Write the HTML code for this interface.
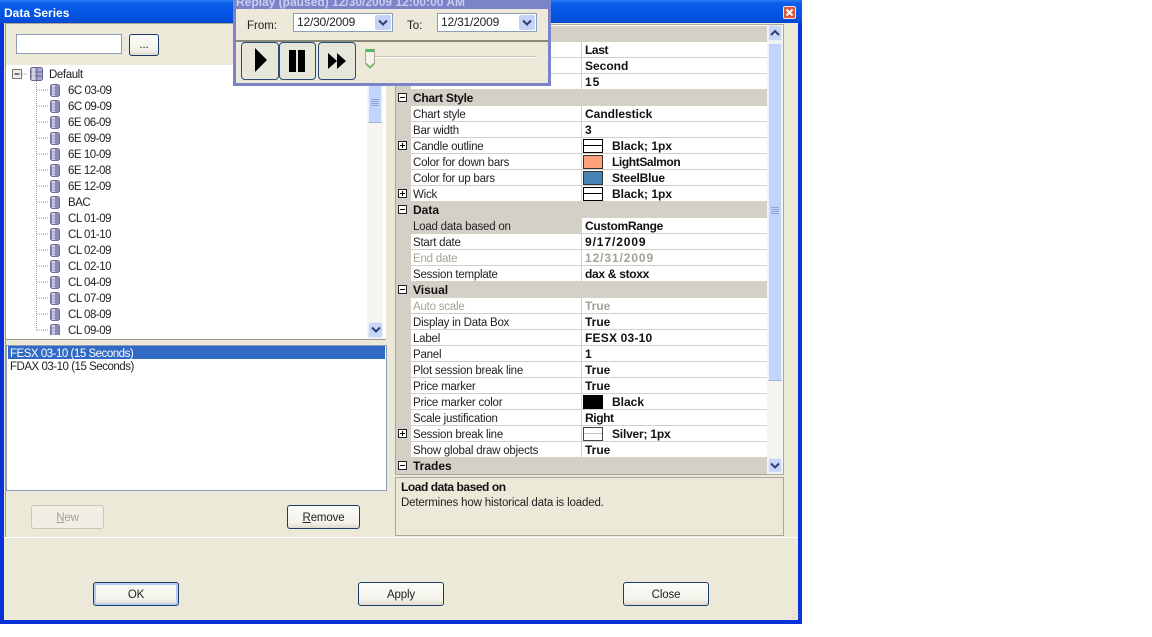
<!DOCTYPE html>
<html><head><meta charset="utf-8"><style>
html,body{margin:0;padding:0;background:#fff}
body{width:1152px;height:637px;overflow:hidden;position:relative;font:11.5px "Liberation Sans",sans-serif;color:#000}
div,span,svg{position:absolute;box-sizing:border-box}
.t{white-space:nowrap;line-height:18px;height:16px}
.tree{left:68px;color:#222;letter-spacing:-.48px}
.r{left:411px;width:356px;height:16px;background:#fff;border-bottom:1px solid #d4d0c8}
.h{left:396px;width:371px;height:16px;background:#d4d0c8}
.n{left:413px;color:#222;letter-spacing:-.22px}
.v{left:585px;font:bold 12px "Liberation Sans",sans-serif;line-height:16px;color:#111}
.hl{left:413px;font:bold 12px "Liberation Sans",sans-serif;line-height:16px;color:#111}
.sep{left:581px;width:1px;height:16px;background:#d4d0c8}
.pm{width:9px;height:9px;border:1px solid #222;background:#fff;left:398px}
.pm i{position:absolute;left:1px;top:3px;width:5px;height:1px;background:#000}
.pm b{position:absolute;left:3px;top:1px;width:1px;height:5px;background:#000}
.sw{left:583px;width:20px;height:14px;border:1px solid #000}
.ln{background:linear-gradient(#fff 5px,#000 5px,#000 6px,#fff 6px)}
.btn{border:1px solid #1c3c68;border-radius:3px;background:linear-gradient(#fbfbf8,#f3f2ea 75%,#dedacd);text-align:center;color:#222;letter-spacing:-.15px}
.mb{border:1px solid #2a4a78;border-radius:4px;background:#e6e6da;top:42px;height:38px}
.date{background:#fff;border:1px solid #8d9db8;height:19px;top:13px;color:#222;padding-left:3px;line-height:16px;font-size:12px;letter-spacing:-.2px}
.ar{right:1px;top:1px;width:16px;height:15px;background:#c5d3f4;border-radius:2px}
u{text-decoration:underline}
</style></head><body>
<svg width="0" height="0" style="position:absolute"><defs>
<symbol id="db" viewBox="0 0 10 13"><rect x=".5" y=".5" width="9" height="12" rx="2" fill="#8f8fc0" stroke="#70709a"/><rect x="2" y="1" width="3" height="11" fill="#d0d0ea"/><path d="M1 4h8M1 7h8M1 10h8" stroke="#70709a" stroke-width=".6"/></symbol>
<symbol id="ch" viewBox="0 0 10 8"><path d="M1 1.500L5 5.500L9 1.500" fill="none" stroke="#2a3f78" stroke-width="2"/></symbol>
<symbol id="up" viewBox="0 0 10 8"><path d="M1 6L5 2L9 6" fill="none" stroke="#2a3f78" stroke-width="2"/></symbol>
</defs></svg>

<!-- window -->
<div style="left:0;top:0;width:802px;height:624px;background:#0831d9"></div>
<div style="left:0;top:0;width:802px;height:24px;background:linear-gradient(#2a7cf0 0,#0a5fe8 3px,#0355e6 12px,#0450dc 20px,#0342c4)"></div>
<div style="left:4px;top:23px;width:794px;height:597px;background:#ece9d8"></div>
<div class="t" style="left:4px;top:5px;color:#fff;font-weight:bold;font-size:12px;line-height:16px">Data Series</div>
<div style="left:783px;top:6px;width:13px;height:13px;background:#d9583a;border:1px solid #f4e4dc;border-radius:2px">
<svg width="11" height="11" style="left:0;top:0"><path d="M2.500 2.500L8.500 8.500M8.500 2.500L2.500 8.500" stroke="#fff" stroke-width="2"/></svg></div>

<!-- left panel -->
<div style="left:5px;top:23px;width:382px;height:514px;border-left:1px solid #9a9a8c;border-top:1px solid #aca899"></div>
<div style="left:16px;top:34px;width:106px;height:20px;background:#fff;border:1px solid #8d9db8"></div>
<div class="btn" style="left:129px;top:34px;width:30px;height:22px;line-height:20px">...</div>

<div style="left:6px;top:65px;width:380px;height:275px;background:#fff;border-bottom:1px solid #9a9a8c"></div>
<div style="left:367px;top:65px;width:16px;height:274px;background:#f5f4ee"></div>
<div style="left:368px;top:80px;width:14px;height:43px;background:#c3d4fc;border:1px solid #eef2fe;border-bottom-color:#9fb3dd"></div>
<svg width="8" height="8" style="left:371px;top:99px"><path d="M0 .5h8M0 2.500h8M0 4.500h8M0 6.500h8" stroke="#8fa6da"/></svg>
<div style="left:368px;top:322px;width:15px;height:16px;background:#c8d6f5;border:1px solid #e8eefc;border-radius:2px"><svg width="10" height="8" style="left:2px;top:3px"><use href="#ch"/></svg></div>

<!-- tree lines -->
<div style="left:36px;top:79px;width:1px;height:251px;border-left:1px dotted #999"></div>
<svg width="60" height="270" style="left:0;top:65px">
<path d="M37 25h12M37 41h12M37 57h12M37 73h12M37 89h12M37 105h12M37 121h12M37 137h12M37 153h12M37 169h12M37 185h12M37 201h12M37 217h12M37 233h12M37 249h12M37 265h12M22 9h6" stroke="#999" stroke-dasharray="1 1" fill="none"/>
<rect x="12.500" y="4.500" width="9" height="9" fill="#eee" stroke="#777"/><path d="M14.500 9h5" stroke="#000"/>
<rect x="30.500" y="2.500" width="12" height="13" rx="2" fill="#a9a9d3" stroke="#66668f"/><path d="M31 7h11M31 11h11M37 3v12" stroke="#66668f"/><rect x="32" y="3" width="3" height="12" fill="#dcdcf0" opacity=".8"/>
<use href="#db" x="50" y="19" width="10" height="13"/><use href="#db" x="50" y="35" width="10" height="13"/><use href="#db" x="50" y="51" width="10" height="13"/><use href="#db" x="50" y="67" width="10" height="13"/><use href="#db" x="50" y="83" width="10" height="13"/><use href="#db" x="50" y="99" width="10" height="13"/><use href="#db" x="50" y="115" width="10" height="13"/><use href="#db" x="50" y="131" width="10" height="13"/><use href="#db" x="50" y="147" width="10" height="13"/><use href="#db" x="50" y="163" width="10" height="13"/><use href="#db" x="50" y="179" width="10" height="13"/><use href="#db" x="50" y="195" width="10" height="13"/><use href="#db" x="50" y="211" width="10" height="13"/><use href="#db" x="50" y="227" width="10" height="13"/><use href="#db" x="50" y="243" width="10" height="13"/><use href="#db" x="50" y="259" width="10" height="13"/>
</svg>
<div class="t" style="left:49px;top:66px;color:#222;letter-spacing:-.4px">Default</div>
<div class="t tree" style="top:82px">6C 03-09</div>
<div class="t tree" style="top:98px">6C 09-09</div>
<div class="t tree" style="top:114px">6E 06-09</div>
<div class="t tree" style="top:130px">6E 09-09</div>
<div class="t tree" style="top:146px">6E 10-09</div>
<div class="t tree" style="top:162px">6E 12-08</div>
<div class="t tree" style="top:178px">6E 12-09</div>
<div class="t tree" style="top:194px">BAC</div>
<div class="t tree" style="top:210px">CL 01-09</div>
<div class="t tree" style="top:226px">CL 01-10</div>
<div class="t tree" style="top:242px">CL 02-09</div>
<div class="t tree" style="top:258px">CL 02-10</div>
<div class="t tree" style="top:274px">CL 04-09</div>
<div class="t tree" style="top:290px">CL 07-09</div>
<div class="t tree" style="top:306px">CL 08-09</div>
<div class="t tree" style="top:322px">CL 09-09</div>

<!-- list -->
<div style="left:6px;top:345px;width:381px;height:146px;background:#fff;border:1px solid #8d9db8"></div>
<div style="left:8px;top:346px;width:377px;height:13px;background:#316ac5"></div>
<div class="t" style="left:10px;top:345px;color:#fff;letter-spacing:-.48px">FESX 03-10 (15 Seconds)</div>
<div class="t" style="left:10px;top:358px;color:#222;letter-spacing:-.48px">FDAX 03-10 (15 Seconds)</div>

<div class="btn" style="left:31px;top:505px;width:73px;height:24px;line-height:24px;color:#a5a294;border-color:#c9c7ba;background:#f1efe4"><u>N</u>ew</div>
<div class="btn" style="left:287px;top:505px;width:73px;height:24px;line-height:24px"><u>R</u>emove</div>

<!-- separator -->
<div style="left:4px;top:537px;width:794px;height:1px;background:#fff"></div>
<div class="btn" style="left:93px;top:582px;width:86px;height:24px;line-height:24px;box-shadow:inset 0 0 0 2px #b6ccf2">OK</div>
<div class="btn" style="left:358px;top:582px;width:86px;height:24px;line-height:24px">Apply</div>
<div class="btn" style="left:623px;top:582px;width:86px;height:24px;line-height:24px">Close</div>
<svg width="12" height="12" style="left:788px;top:610px"><path d="M9.500 1.500h1M6.500 4.500h1M9.500 4.500h1M3.500 7.500h1M6.500 7.500h1M9.500 7.500h1" stroke="#b5b2a2"/></svg>

<!-- property grid -->
<div style="left:395px;top:24px;width:389px;height:451px;background:#fff;border:1px solid #aca899"></div>
<div class="h" style="top:26px"></div>
<div style="left:396px;top:42px;width:15px;height:416px;background:#d4d0c8"></div>

<div class="r" style="top:42px"></div><div class="sep" style="top:42px"></div><div class="t v" style="top:42px;letter-spacing:-.4px">Last</div>
<div class="r" style="top:58px"></div><div class="sep" style="top:58px"></div><div class="t v" style="top:58px">Second</div>
<div class="r" style="top:74px"></div><div class="sep" style="top:74px"></div><div class="t v" style="top:74px;letter-spacing:1px">15</div>

<div class="h" style="top:90px"></div><div class="pm" style="top:93px"><i></i></div><div class="t hl" style="top:90px;letter-spacing:-.3px">Chart Style</div>
<div class="r" style="top:106px"></div><div class="sep" style="top:106px"></div><div class="t n" style="top:106px">Chart style</div><div class="t v" style="top:106px">Candlestick</div>
<div class="r" style="top:122px"></div><div class="sep" style="top:122px"></div><div class="t n" style="top:122px">Bar width</div><div class="t v" style="top:122px">3</div>
<div class="r" style="top:138px"></div><div class="sep" style="top:138px"></div><div class="pm" style="top:141px"><i></i><b></b></div><div class="t n" style="top:138px">Candle outline</div><div class="sw ln" style="top:139px"></div><div class="t v" style="top:138px;left:612px">Black; 1px</div>
<div class="r" style="top:154px"></div><div class="sep" style="top:154px"></div><div class="t n" style="top:154px">Color for down bars</div><div class="sw" style="top:155px;background:#ffa07a;border-color:#333"></div><div class="t v" style="top:154px;left:612px;letter-spacing:-.4px">LightSalmon</div>
<div class="r" style="top:170px"></div><div class="sep" style="top:170px"></div><div class="t n" style="top:170px">Color for up bars</div><div class="sw" style="top:171px;background:#4682b4;border-color:#333"></div><div class="t v" style="top:170px;left:612px;letter-spacing:-.2px">SteelBlue</div>
<div class="r" style="top:186px"></div><div class="sep" style="top:186px"></div><div class="pm" style="top:189px"><i></i><b></b></div><div class="t n" style="top:186px">Wick</div><div class="sw ln" style="top:187px"></div><div class="t v" style="top:186px;left:612px">Black; 1px</div>

<div class="h" style="top:202px"></div><div class="pm" style="top:205px"><i></i></div><div class="t hl" style="top:202px">Data</div>
<div class="r" style="top:218px"></div><div style="left:411px;top:218px;width:171px;height:16px;background:#d4d0c8"></div><div class="t n" style="top:218px">Load data based on</div><div class="t v" style="top:218px;letter-spacing:-.3px">CustomRange</div>
<div class="r" style="top:234px"></div><div class="sep" style="top:234px"></div><div class="t n" style="top:234px">Start date</div><div class="t v" style="top:234px;letter-spacing:.9px">9/17/2009</div>
<div class="r" style="top:250px"></div><div class="sep" style="top:250px"></div><div class="t n" style="top:250px;color:#a5a294">End date</div><div class="t v" style="top:250px;color:#a5a294;letter-spacing:.9px">12/31/2009</div>
<div class="r" style="top:266px"></div><div class="sep" style="top:266px"></div><div class="t n" style="top:266px">Session template</div><div class="t v" style="top:266px;letter-spacing:-.3px">dax &amp; stoxx</div>

<div class="h" style="top:282px"></div><div class="pm" style="top:285px"><i></i></div><div class="t hl" style="top:282px">Visual</div>
<div class="r" style="top:298px"></div><div class="sep" style="top:298px"></div><div class="t n" style="top:298px;color:#a5a294">Auto scale</div><div class="t v" style="top:298px;color:#a5a294">True</div>
<div class="r" style="top:314px"></div><div class="sep" style="top:314px"></div><div class="t n" style="top:314px">Display in Data Box</div><div class="t v" style="top:314px">True</div>
<div class="r" style="top:330px"></div><div class="sep" style="top:330px"></div><div class="t n" style="top:330px">Label</div><div class="t v" style="top:330px;letter-spacing:.2px">FESX 03-10</div>
<div class="r" style="top:346px"></div><div class="sep" style="top:346px"></div><div class="t n" style="top:346px">Panel</div><div class="t v" style="top:346px">1</div>
<div class="r" style="top:362px"></div><div class="sep" style="top:362px"></div><div class="t n" style="top:362px">Plot session break line</div><div class="t v" style="top:362px">True</div>
<div class="r" style="top:378px"></div><div class="sep" style="top:378px"></div><div class="t n" style="top:378px">Price marker</div><div class="t v" style="top:378px">True</div>
<div class="r" style="top:394px"></div><div class="sep" style="top:394px"></div><div class="t n" style="top:394px">Price marker color</div><div class="sw" style="top:395px;background:#000"></div><div class="t v" style="top:394px;left:612px">Black</div>
<div class="r" style="top:410px"></div><div class="sep" style="top:410px"></div><div class="t n" style="top:410px">Scale justification</div><div class="t v" style="top:410px;letter-spacing:-.4px">Right</div>
<div class="r" style="top:426px"></div><div class="sep" style="top:426px"></div><div class="pm" style="top:429px"><i></i><b></b></div><div class="t n" style="top:426px">Session break line</div><div class="sw" style="top:427px;border-color:#444;background:linear-gradient(#fff 5px,#c0c0c0 5px,#c0c0c0 6px,#fff 6px)"></div><div class="t v" style="top:426px;left:612px;letter-spacing:-.2px">Silver; 1px</div>
<div class="r" style="top:442px"></div><div class="sep" style="top:442px"></div><div class="t n" style="top:442px">Show global draw objects</div><div class="t v" style="top:442px">True</div>
<div class="h" style="top:458px"></div><div class="pm" style="top:461px"><i></i></div><div class="t hl" style="top:458px">Trades</div>

<!-- grid scrollbar -->
<div style="left:767px;top:25px;width:16px;height:449px;background:#f5f4ee"></div>
<div style="left:768px;top:25px;width:14px;height:16px;background:#c8d6f5;border:1px solid #e8eefc;border-radius:2px"><svg width="10" height="8" style="left:1px;top:3px"><use href="#up"/></svg></div>
<div style="left:768px;top:43px;width:14px;height:338px;background:#c3d4fc;border:1px solid #eef2fe;border-bottom-color:#9fb3dd"></div>
<svg width="8" height="8" style="left:771px;top:207px"><path d="M0 .5h8M0 2.500h8M0 4.500h8M0 6.500h8" stroke="#8fa6da"/></svg>
<div style="left:768px;top:458px;width:14px;height:15px;background:#c8d6f5;border:1px solid #e8eefc;border-radius:2px"><svg width="10" height="8" style="left:1px;top:3px"><use href="#ch"/></svg></div>

<!-- help -->
<div style="left:395px;top:477px;width:389px;height:59px;border:1px solid #aca899;background:#ece9d8"></div>
<div class="t" style="left:401px;top:479px;font:bold 12px 'Liberation Sans',sans-serif;line-height:16px;color:#111;letter-spacing:-.45px">Load data based on</div>
<div class="t" style="left:401px;top:494px;color:#222;letter-spacing:-.17px">Determines how historical data is loaded.</div>

<!-- replay window -->
<div style="left:233px;top:0;width:318px;height:86px;background:#7b83c9"></div>
<div style="left:236px;top:9px;width:312px;height:74px;background:#ece9d8"></div>
<div class="t" style="left:236px;top:-6px;color:#c9cdf0;font-weight:bold;font-size:12px;line-height:16px">Replay (paused) 12/30/2009 12:00:00 AM</div>
<div class="t" style="left:247px;top:17px;color:#222">From:</div>
<div class="date" style="left:293px;width:100px">12/30/2009<div class="ar"><svg width="10" height="8" style="left:3px;top:4px"><use href="#ch"/></svg></div></div>
<div class="t" style="left:407px;top:17px;color:#222">To:</div>
<div class="date" style="left:437px;width:100px">12/31/2009<div class="ar"><svg width="10" height="8" style="left:3px;top:4px"><use href="#ch"/></svg></div></div>
<div style="left:236px;top:40px;width:312px;height:2px;background:#8a8878"></div>
<div class="mb" style="left:241px;width:38px"></div>
<div class="mb" style="left:279px;width:37px"></div>
<div class="mb" style="left:318px;width:38px"></div>
<svg width="130" height="40" style="left:241px;top:42px"><path d="M14 6L26 18L14 30Z" fill="#000"/><path d="M48 8h7v22h-7zM57 8h7v22h-7z" fill="#000"/><path d="M87 11L96 19L87 27ZM96 11L105 19L96 27Z" fill="#000"/></svg>
<div style="left:370px;top:56px;width:167px;height:2px;background:#c8c5b4;border-bottom:1px solid #fff"></div>
<svg width="12" height="22" style="left:364px;top:48px"><path d="M1.500 1.500h9v14l-4.500 4.500l-4.500-4.500z" fill="#f4f3ec" stroke="#a9a795"/><path d="M2 2.500h8" stroke="#5cb85c" stroke-width="3"/><path d="M2 15.500l4 4l4-4" fill="none" stroke="#5cb85c" stroke-width="1.500"/></svg>
</body></html>
